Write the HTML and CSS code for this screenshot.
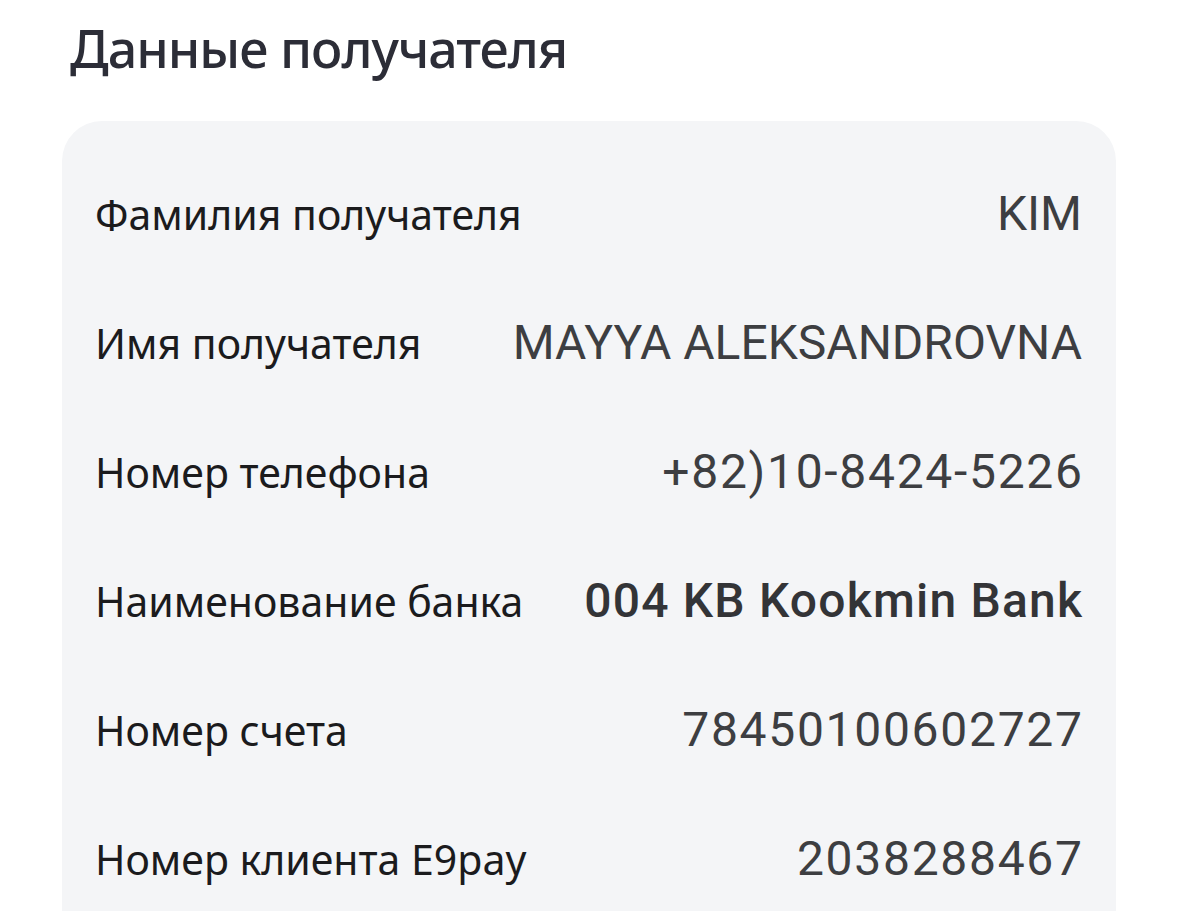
FILE: index.html
```html
<!DOCTYPE html>
<html lang="ru">
<head>
<meta charset="utf-8">
<link rel="stylesheet" href="styles.css">
</head>
<body>
<div class="page">
  <h1 class="title">Данные получателя</h1>
  <div class="card">
    <div class="row"><span class="label">Фамилия получателя</span><span class="value">KIM</span></div>
    <div class="row"><span class="label">Имя получателя</span><span class="value">MAYYA ALEKSANDROVNA</span></div>
    <div class="row"><span class="label">Номер телефона</span><span class="value value-num">+82)10-8424-5226</span></div>
    <div class="row"><span class="label">Наименование банка</span><span class="value value-strong">004 KB Kookmin Bank</span></div>
    <div class="row"><span class="label">Номер счета</span><span class="value value-num">78450100602727</span></div>
    <div class="row"><span class="label">Номер клиента E9pay</span><span class="value value-num">2038288467</span></div>
  </div>
</div>
</body>
</html>
```
FILE: styles.css
```css
html, body {
  margin: 0;
  padding: 0;
  background: #ffffff;
}
body {
  font-family: "Noto Sans", "Open Sans", sans-serif;
  overflow: hidden;
  height: 911px;
}
.page {
  padding: 0 61px 0 62px;
}
.title {
  margin: 0;
  padding: 17px 0 0 8px;
  height: 121px;
  box-sizing: border-box;
  font-size: 52px;
  letter-spacing: -1px;
  font-weight: 500;
  color: #2c2d37;
  line-height: 62px;
}
.card {
  background: #f4f5f7;
  border-radius: 40px;
  padding: 28px 34px 40px 33px;
  margin-right: 2px;
}
.row {
  display: flex;
  justify-content: space-between;
  align-items: center;
  height: 129px;
}
.label {
  font-size: 41px;
  color: #1b1b1d;
  white-space: nowrap;
}
.value {
  font-family: Roboto, "Liberation Sans", sans-serif;
  font-size: 48px;
  font-weight: 400;
  color: #3d3e41;
  white-space: nowrap;
}
.value-num {
  letter-spacing: 1.7px;
  margin-right: -1.7px;
}
.value-strong {
  font-weight: 500;
  letter-spacing: 1.2px;
  margin-right: -1.2px;
  color: #333437;
}
```
